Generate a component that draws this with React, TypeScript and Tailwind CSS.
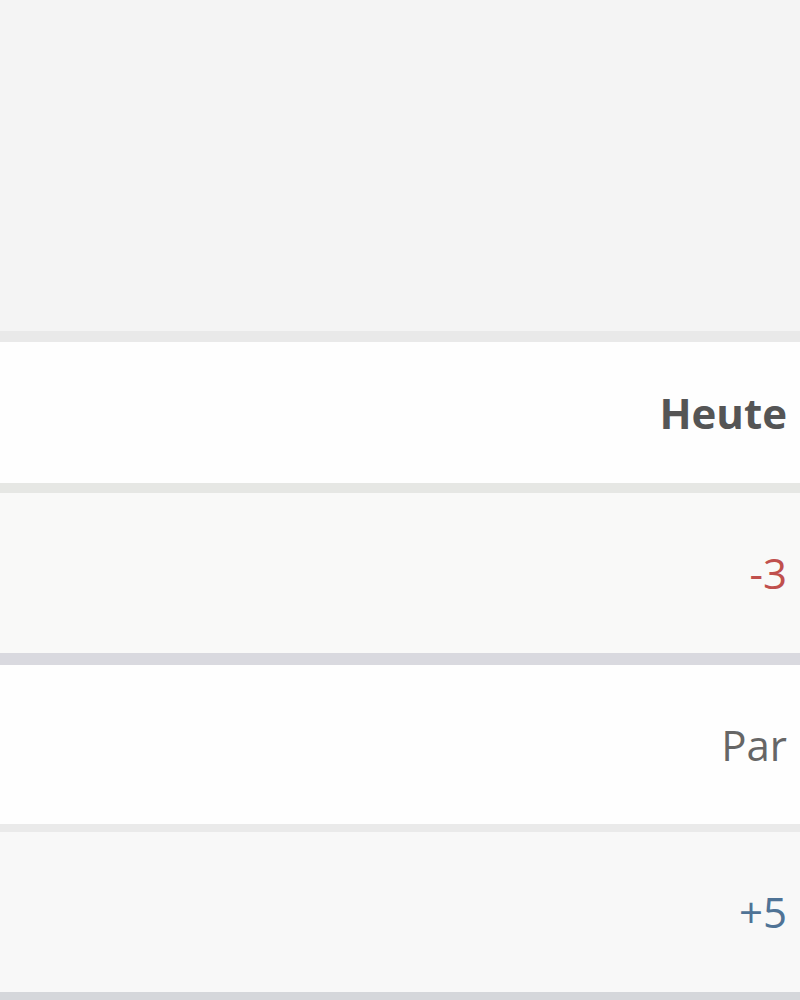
const rows = [
  { label: "Heute", cls: "font-bold text-[#555555]", bg: "bg-[#fefefe]", h: "h-[141px]", line: "h-[10px] bg-[#e6e7e4]" },
  { label: "-3", cls: "font-normal text-[#c0504d]", bg: "bg-[#f9f9f8]", h: "h-[160px]", line: "h-[12px] bg-[#d9d9df]" },
  { label: "Par", cls: "font-normal text-[#666666]", bg: "bg-[#fefefe]", h: "h-[159px]", line: "h-[8px] bg-[#eaeaea]" },
  { label: "+5", cls: "font-normal text-[#4f7396]", bg: "bg-[#f8f8f8]", h: "h-[160px]", line: "h-[8px] bg-[#d5d7db]" },
];

export default function App() {
  return (
    <div className="w-[800px] h-[1000px] overflow-hidden bg-[#f4f4f4] flex flex-col" style={{ fontFamily: '"Open Sans", "Liberation Sans", sans-serif' }}>
      {/* empty header area */}
      <div className="h-[331px] bg-[#f4f4f4]" />
      <div className="h-[11px] bg-[#e9e9e9]" />

      {rows.map((r) => (
        <div key={r.label} className="flex flex-col">
          <div className={`${r.h} ${r.bg} flex items-center justify-end pr-[13px]`}>
            <span className={`text-[42px] leading-none ${r.cls}`}>{r.label}</span>
          </div>
          <div className={r.line} />
        </div>
      ))}
    </div>
  );
}
